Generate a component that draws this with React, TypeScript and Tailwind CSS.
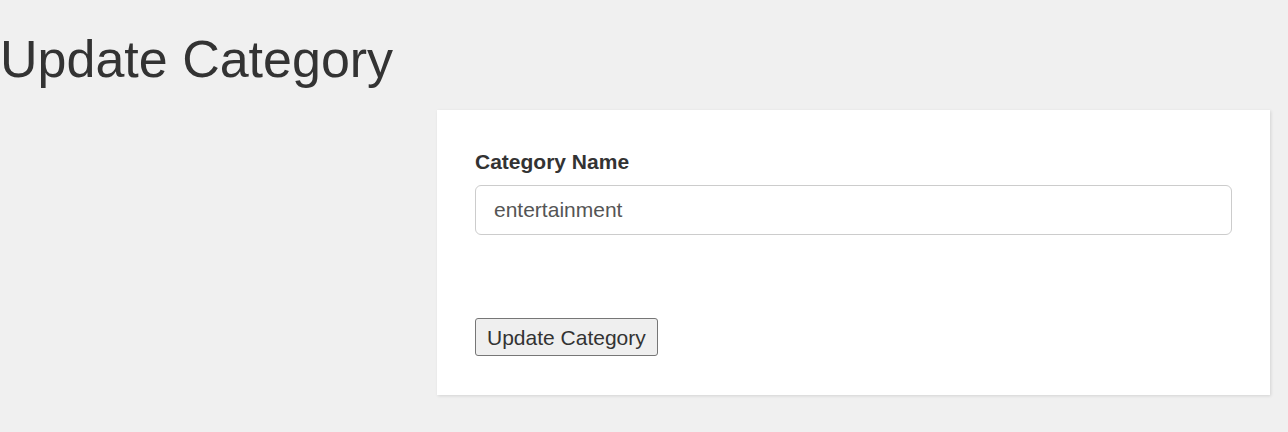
export default function App() {
  return (
    <div className="min-h-[432px] bg-[#f0f0f0] pt-[31px] font-['Liberation_Sans',Arial,sans-serif] text-[#333]">
      <h1 className="text-[52px] leading-[57px] font-normal">Update Category</h1>

      <div className="ml-[437px] mr-[18px] mt-[22px] bg-white px-[38px] pt-[37px] pb-[39px] shadow-[1px_1px_3px_rgba(0,0,0,0.12)]">
        <label className="block text-[21px] leading-[30px] font-bold">Category Name</label>
        <input
          type="text"
          defaultValue="entertainment"
          className="mt-[8px] block h-[50px] w-full rounded-[6px] border border-[#ccc] bg-white px-[18px] text-[21px] text-[#555] outline-none"
        />
        <button className="mt-[83px] block h-[38px] rounded-[3px] border border-[#767676] bg-[#efefef] px-[11px] text-[21px] leading-none text-[#333]">
          Update Category
        </button>
      </div>
    </div>
  );
}
